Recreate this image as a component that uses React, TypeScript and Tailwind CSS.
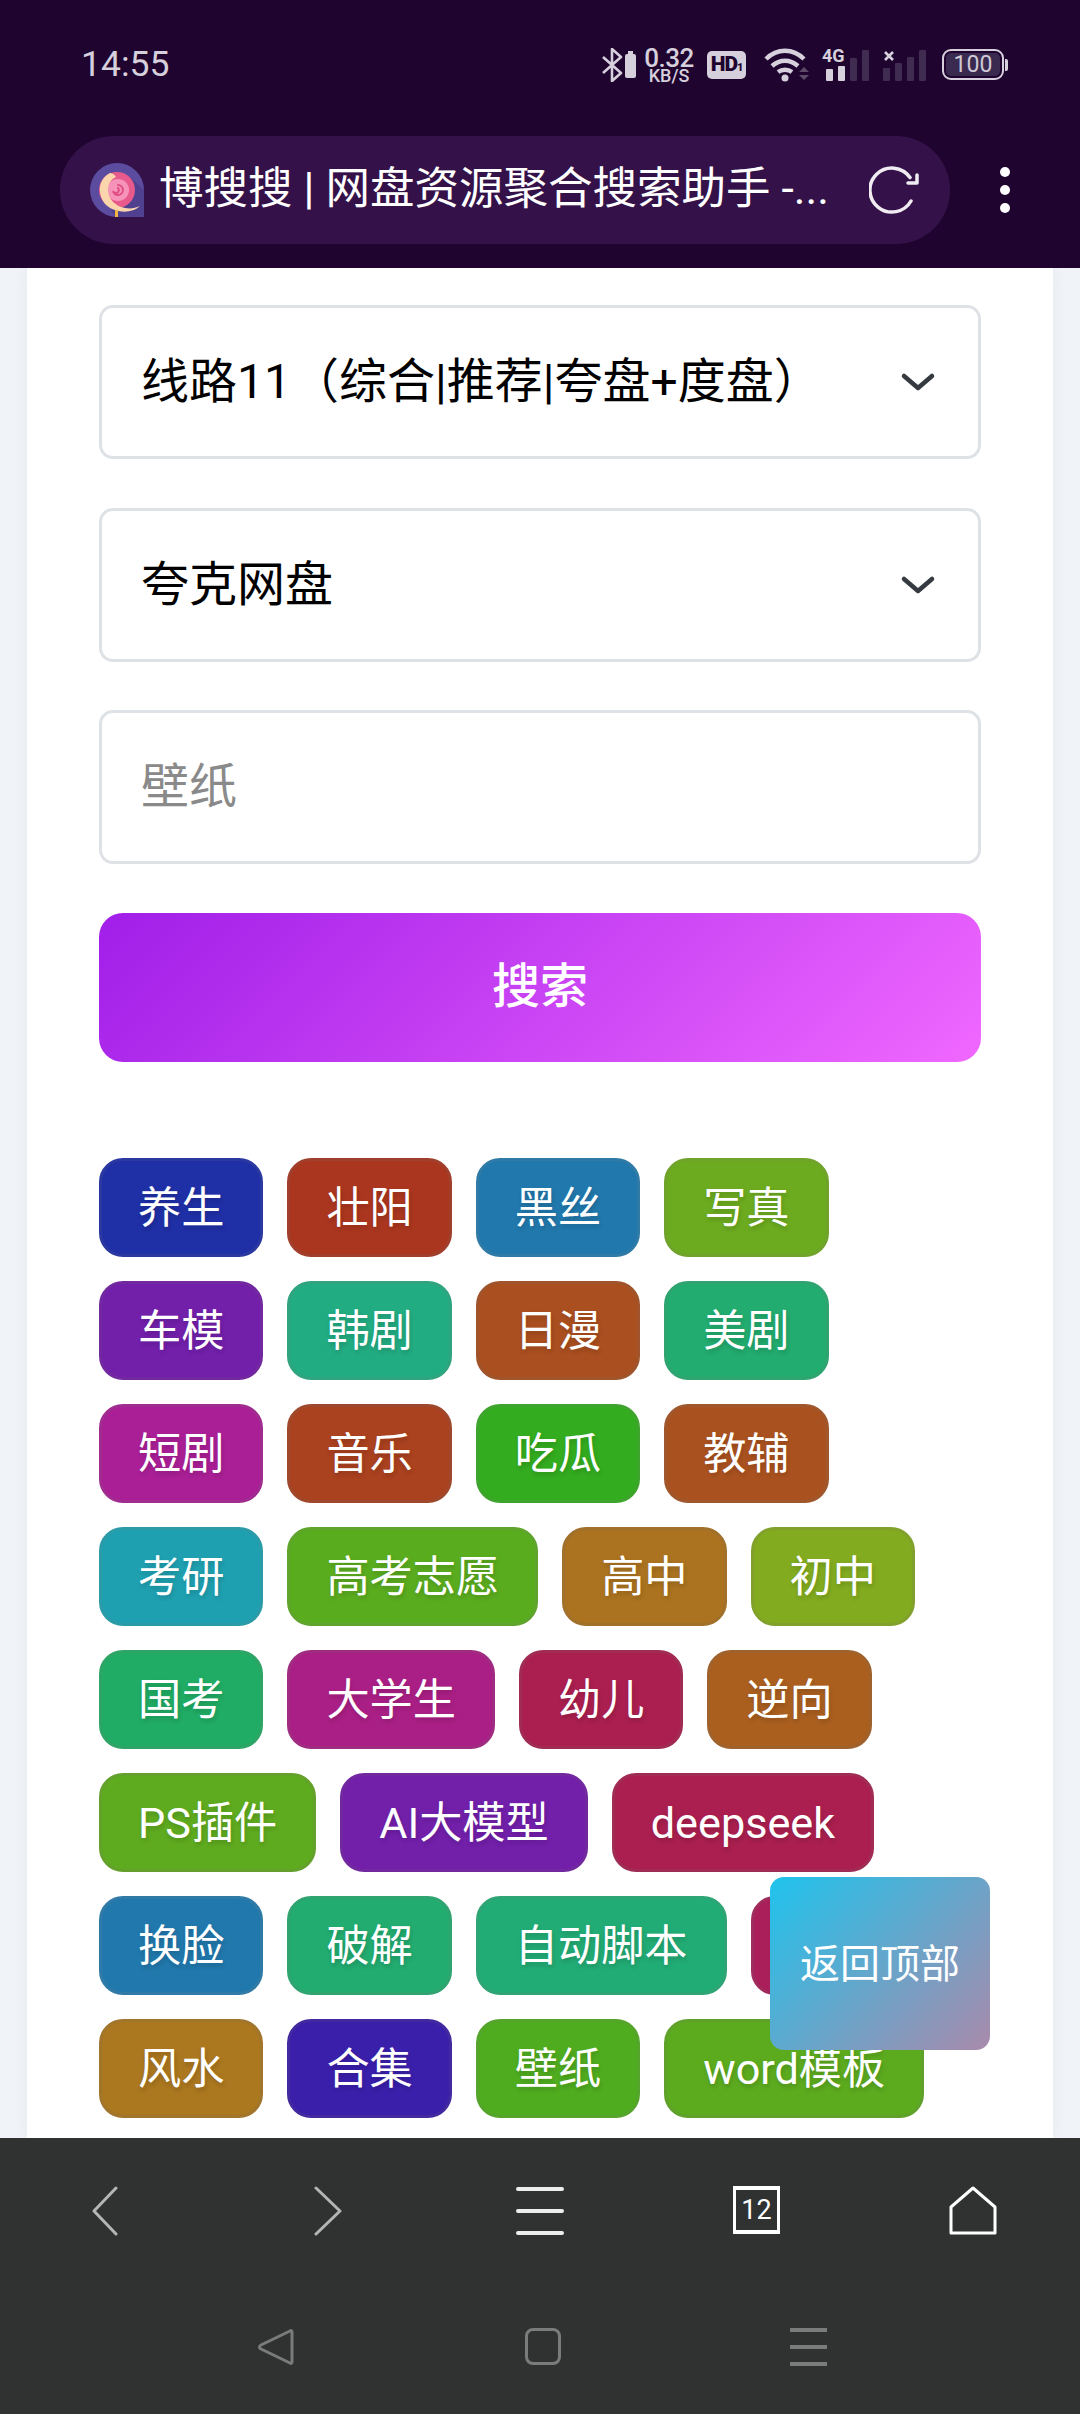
const FONT = "font-['Roboto','Noto_Sans_CJK_SC',sans-serif]";

type Tag = [string, string, string];
const tags: Tag[] = [
  ["养生", "bg-[#1f2fa5]", "border-[#2a38a0]"],
  ["壮阳", "bg-[#aa361f]", "border-[#a03f2c]"],
  ["黑丝", "bg-[#2178ac]", "border-[#2f7aa6]"],
  ["写真", "bg-[#6cab1f]", "border-[#70a32c]"],
  ["车模", "bg-[#721faa]", "border-[#7229a0]"],
  ["韩剧", "bg-[#22ac82]", "border-[#2fa47f]"],
  ["日漫", "bg-[#aa4f1f]", "border-[#a0542c]"],
  ["美剧", "bg-[#22ac6f]", "border-[#2fa470]"],
  ["短剧", "bg-[#aa1f96]", "border-[#a02c8f]"],
  ["音乐", "bg-[#aa411f]", "border-[#a0482c]"],
  ["吃瓜", "bg-[#33ac1f]", "border-[#3fa42e]"],
  ["教辅", "bg-[#aa521f]", "border-[#a0572c]"],
  ["考研", "bg-[#1fa0b0]", "border-[#2c9ba8]"],
  ["高考志愿", "bg-[#5aac1f]", "border-[#5fa42c]"],
  ["高中", "bg-[#ab731f]", "border-[#a1712c]"],
  ["初中", "bg-[#82ab1f]", "border-[#81a12c]"],
  ["国考", "bg-[#20ac64]", "border-[#2ea466]"],
  ["大学生", "bg-[#aa1f85]", "border-[#a02c81]"],
  ["幼儿", "bg-[#aa1f4f]", "border-[#a02c54]"],
  ["逆向", "bg-[#aa5f1f]", "border-[#a0622c]"],
  ["PS插件", "bg-[#5fab1f]", "border-[#63a12c]"],
  ["AI大模型", "bg-[#721faa]", "border-[#7229a0]"],
  ["deepseek", "bg-[#aa1f4f]", "border-[#a02c54]"],
  ["换脸", "bg-[#2178ac]", "border-[#2f7aa6]"],
  ["破解", "bg-[#22ac70]", "border-[#2fa471]"],
  ["自动脚本", "bg-[#22ac75]", "border-[#2fa475]"],
  ["素材", "bg-[#aa1f5a]", "border-[#a02c5e]"],
  ["风水", "bg-[#ab771f]", "border-[#a1752c]"],
  ["合集", "bg-[#3a1faa]", "border-[#4229a0]"],
  ["壁纸", "bg-[#4fac1f]", "border-[#55a42c]"],
  ["word模板", "bg-[#5cab1f]", "border-[#60a12c]"],
];

function Chevron() {
  return (
    <svg width="36" height="22" viewBox="0 0 36 22" fill="none" className="shrink-0">
      <path d="M4 5l14 12L32 5" stroke="#343a40" strokeWidth="4.5" strokeLinecap="round" strokeLinejoin="round" />
    </svg>
  );
}

function SelectBox({ label }: { label: string }) {
  return (
    <div className="flex h-[154px] items-center justify-between rounded-[14px] border-[3px] border-[#dee2e6] bg-white pr-[42px] pl-[39px]">
      <span className="text-[48px] leading-none whitespace-nowrap text-black">{label}</span>
      <Chevron />
    </div>
  );
}

function Logo() {
  return (
    <svg width="54" height="54" viewBox="0 0 54 54" className="shrink-0">
      <path d="M27 0a27 27 0 0 1 27 27v27H27A27 27 0 0 1 27 0z" fill="#5c4c9f" />
      <path d="M40 14l14 13v27H27l-6-6z" fill="#4f4190" />
      <circle cx="27" cy="27" r="18" fill="#e85a8c" />
      <circle cx="28" cy="27" r="11" fill="#f693b9" />
      <path d="M28 22a5 5 0 1 1-5 6 3 3 0 1 0 5-3" fill="none" stroke="#e14f82" strokeWidth="2" strokeLinecap="round" />
      <path d="M20 10C12 14 9 22 10 29c1 9 7 16 15 18 8 3 19 2 25-4-6 3-13 3-19 1-8-3-13-10-13-17 0-6 3-11 8-13-2-3-4-4-6-4z" fill="#fbd6ad" />
      <rect x="25" y="47" width="3" height="7" fill="#f2b441" />
    </svg>
  );
}

function StatusBar() {
  return (
    <div className="flex h-[128px] items-center justify-between pt-[1px] pr-[72px] pl-[81px] text-[#d6cfdc]">
      <span className="font-['Roboto',sans-serif] text-[35.5px] leading-none">14:55</span>
      <div className="flex items-center">
        <svg width="36" height="34" viewBox="0 0 36 34" fill="none">
          <path d="M2 9l18 16-9 8V1l9 8L2 25" stroke="#d6cfdc" strokeWidth="2.6" strokeLinejoin="round" />
          <rect x="24" y="6" width="11" height="24" rx="2" fill="#d6cfdc" />
          <rect x="27" y="3" width="5" height="3" fill="#d6cfdc" />
        </svg>
        <div className="ml-[7px] flex w-[50px] flex-col items-center font-['Roboto',sans-serif] font-medium">
          <span className="text-[26px] leading-[22px] tracking-[-0.5px]">0.32</span>
          <span className="text-[18px] leading-[14px]">KB/S</span>
        </div>
        <div className="ml-[13px] flex h-[28px] w-[39px] items-baseline justify-center rounded-[5px] bg-[#d6cfdc] pt-[3px] font-['Roboto',sans-serif] text-[21px] leading-none font-black tracking-[-1px] text-[#1f0430]">
          HD<span className="text-[11px]">1</span>
        </div>
        <svg width="48" height="34" viewBox="0 0 48 34" fill="none" className="ml-[18px]">
          <path d="M2 11c11-11 27-11 38 0M8 18c8-7 18-7 26 0M14 24c4-3 10-3 14 0" stroke="#d6cfdc" strokeWidth="4.4" />
          <circle cx="21" cy="30" r="3.5" fill="#d6cfdc" />
          <path d="M35 24l5-5 5 5zM35 27l5 5 5-5z" fill="#5b4a68" />
        </svg>
        <div className="relative ml-[11px] h-[32px] w-[46px]">
          <span className="absolute top-[-2px] left-[-1px] font-['Roboto',sans-serif] text-[18px] leading-none font-bold">4G</span>
          <svg width="46" height="32" viewBox="0 0 46 32" className="absolute top-0 left-0">
            <rect x="3" y="20" width="7" height="12" rx="1" fill="#d6cfdc" />
            <rect x="15" y="17" width="7" height="15" rx="1" fill="#d6cfdc" />
            <rect x="27" y="9" width="7" height="23" rx="1" fill="#3f2c50" />
            <rect x="39" y="1" width="7" height="31" rx="1" fill="#3f2c50" />
          </svg>
        </div>
        <svg width="44" height="32" viewBox="0 0 44 32" className="ml-[14px]">
          <path d="M2 3l8 8M10 3l-8 8" stroke="#d6cfdc" strokeWidth="2.6" />
          <rect x="0" y="19" width="7" height="13" rx="1" fill="#3f2c50" />
          <rect x="12" y="14" width="7" height="18" rx="1" fill="#3f2c50" />
          <rect x="24" y="8" width="7" height="24" rx="1" fill="#3f2c50" />
          <rect x="36" y="1" width="7" height="31" rx="1" fill="#3f2c50" />
        </svg>
        <div className="ml-[15px] flex items-center">
          <div className="flex h-[31px] w-[62px] rounded-[9px] border-[2px] border-[#d6cfdc] p-[2px]">
            <span className="flex flex-1 items-center justify-center rounded-[5px] bg-[#3a2a4f] font-['Roboto',sans-serif] text-[23px] leading-none text-[#cfc8d6]">100</span>
          </div>
          <span className="ml-[1px] h-[12px] w-[3px] rounded-r-[2px] bg-[#d6cfdc]" />
        </div>
      </div>
    </div>
  );
}

function AddressBar() {
  return (
    <div className="flex items-center pr-[21px] pl-[60px]">
      <div className="flex h-[108px] w-[890px] items-center rounded-[54px] bg-[#341249] pr-[29px] pl-[30px]">
        <Logo />
        <span className={`ml-[15px] min-w-0 flex-1 text-[44.5px] leading-[1.2] whitespace-nowrap text-white ${FONT}`}>
          博搜搜 | 网盘资源聚合搜索助手 -...
        </span>
        <svg width="52" height="50" viewBox="0 0 52 50" fill="none" className="shrink-0">
          <path d="M41 12.5A22 22 0 1 0 42 36" stroke="#f0ecf2" strokeWidth="3.5" strokeLinecap="round" />
          <path d="M48 10v8h-9" stroke="#f0ecf2" strokeWidth="3.5" strokeLinecap="round" strokeLinejoin="round" />
        </svg>
      </div>
      <div className="ml-[50px] flex flex-col gap-[8px]">
        <span className="h-[10px] w-[10px] rounded-full bg-white" />
        <span className="h-[10px] w-[10px] rounded-full bg-white" />
        <span className="h-[10px] w-[10px] rounded-full bg-white" />
      </div>
    </div>
  );
}

function BrowserNav() {
  return (
    <div className="flex h-[190px] items-start pt-[48px] pl-[92px]">
      <svg width="26" height="50" viewBox="0 0 26 50" fill="none">
        <path d="M24 2L2 25l22 23" stroke="#b5b5b5" strokeWidth="3" strokeLinecap="round" strokeLinejoin="round" />
      </svg>
      <svg width="28" height="50" viewBox="0 0 28 50" fill="none" className="ml-[196px]">
        <path d="M2 2l24 23L2 48" stroke="#b5b5b5" strokeWidth="3" strokeLinecap="round" strokeLinejoin="round" />
      </svg>
      <svg width="48" height="50" viewBox="0 0 48 50" fill="none" className="ml-[174px]">
        <path d="M2 3h44M2 25h44M2 47h44" stroke="#ececec" strokeWidth="4" strokeLinecap="round" />
      </svg>
      <div className="ml-[169px] flex h-[48px] w-[47px] items-center justify-center border-[3px] border-t-[4px] border-b-[4px] border-white font-['Roboto',sans-serif] text-[27px] leading-none text-white">
        12
      </div>
      <svg width="48" height="50" viewBox="0 0 48 50" fill="none" className="ml-[169px]">
        <path d="M24 2L46 21v26H2V21z" stroke="#ffffff" strokeWidth="3" strokeLinejoin="round" />
      </svg>
    </div>
  );
}

function SystemNav() {
  return (
    <div className="flex items-start pl-[256px]">
      <svg width="38" height="38" viewBox="0 0 38 38" fill="none">
        <path d="M34 3c1-1 2 0 2 1v30c0 1-1 2-2 1L5 21c-2-1-2-3 0-4z" stroke="#7b7b7b" strokeWidth="3" strokeLinejoin="round" />
      </svg>
      <div className="ml-[231px] h-[37px] w-[36px] rounded-[8px] border-[3px] border-[#7b7b7b]" />
      <div className="ml-[229px] flex w-[37px] flex-col gap-[13px]">
        <span className="h-[4px] bg-[#7b7b7b]" />
        <span className="h-[4px] bg-[#7b7b7b]" />
        <span className="h-[4px] bg-[#7b7b7b]" />
      </div>
    </div>
  );
}

export default function App() {
  return (
    <div className={`flex h-[2414px] w-[1080px] flex-col overflow-hidden ${FONT}`}>
      <header className="h-[268px] shrink-0 bg-[#1f0430]">
        <StatusBar />
        <div className="pt-[8px]">
          <AddressBar />
        </div>
      </header>

      <main className="relative min-h-0 flex-1 overflow-hidden bg-[#f0f3f8]">
        <div className="mx-[27px] h-full bg-white px-[72px] pt-[37px] shadow-[0_0_16px_rgba(0,0,0,0.05)]">
          <div className="flex flex-col gap-[48.5px]">
            <SelectBox label="线路11（综合|推荐|夸盘+度盘）" />
            <SelectBox label="夸克网盘" />
            <div className="flex h-[154px] items-center rounded-[14px] border-[3px] border-[#dee2e6] bg-white pl-[39px]">
              <span className="text-[48px] leading-none text-[#8a8a8a]">壁纸</span>
            </div>
            <button className="flex h-[149px] items-center justify-center rounded-[24px] bg-[linear-gradient(135deg,#a01ee8,#f068ff)] text-[48px] leading-none font-medium text-white">
              搜索
            </button>
          </div>
          <div className="mt-[96.5px] flex flex-wrap gap-[24px]">
            {tags.map(([label, bg, border]) => (
              <span
                key={label}
                className={`flex h-[99px] items-center rounded-[24px] border-[3px] px-[36px] pt-[3px] text-[43.2px] leading-none whitespace-nowrap text-white [text-shadow:1px_3px_4px_rgba(0,0,0,0.15)] ${bg} ${border}`}
              >
                {label}
              </span>
            ))}
          </div>
        </div>
        <div className="absolute top-[1609px] left-[770px] flex h-[173px] w-[220px] items-center justify-center rounded-[14px] bg-[linear-gradient(135deg,#1fc3ec,#a98aab)] pt-[3px] text-[40px] leading-none text-white">
          返回顶部
        </div>
      </main>

      <footer className="h-[276px] shrink-0 bg-[#303232]">
        <BrowserNav />
        <SystemNav />
      </footer>
    </div>
  );
}
